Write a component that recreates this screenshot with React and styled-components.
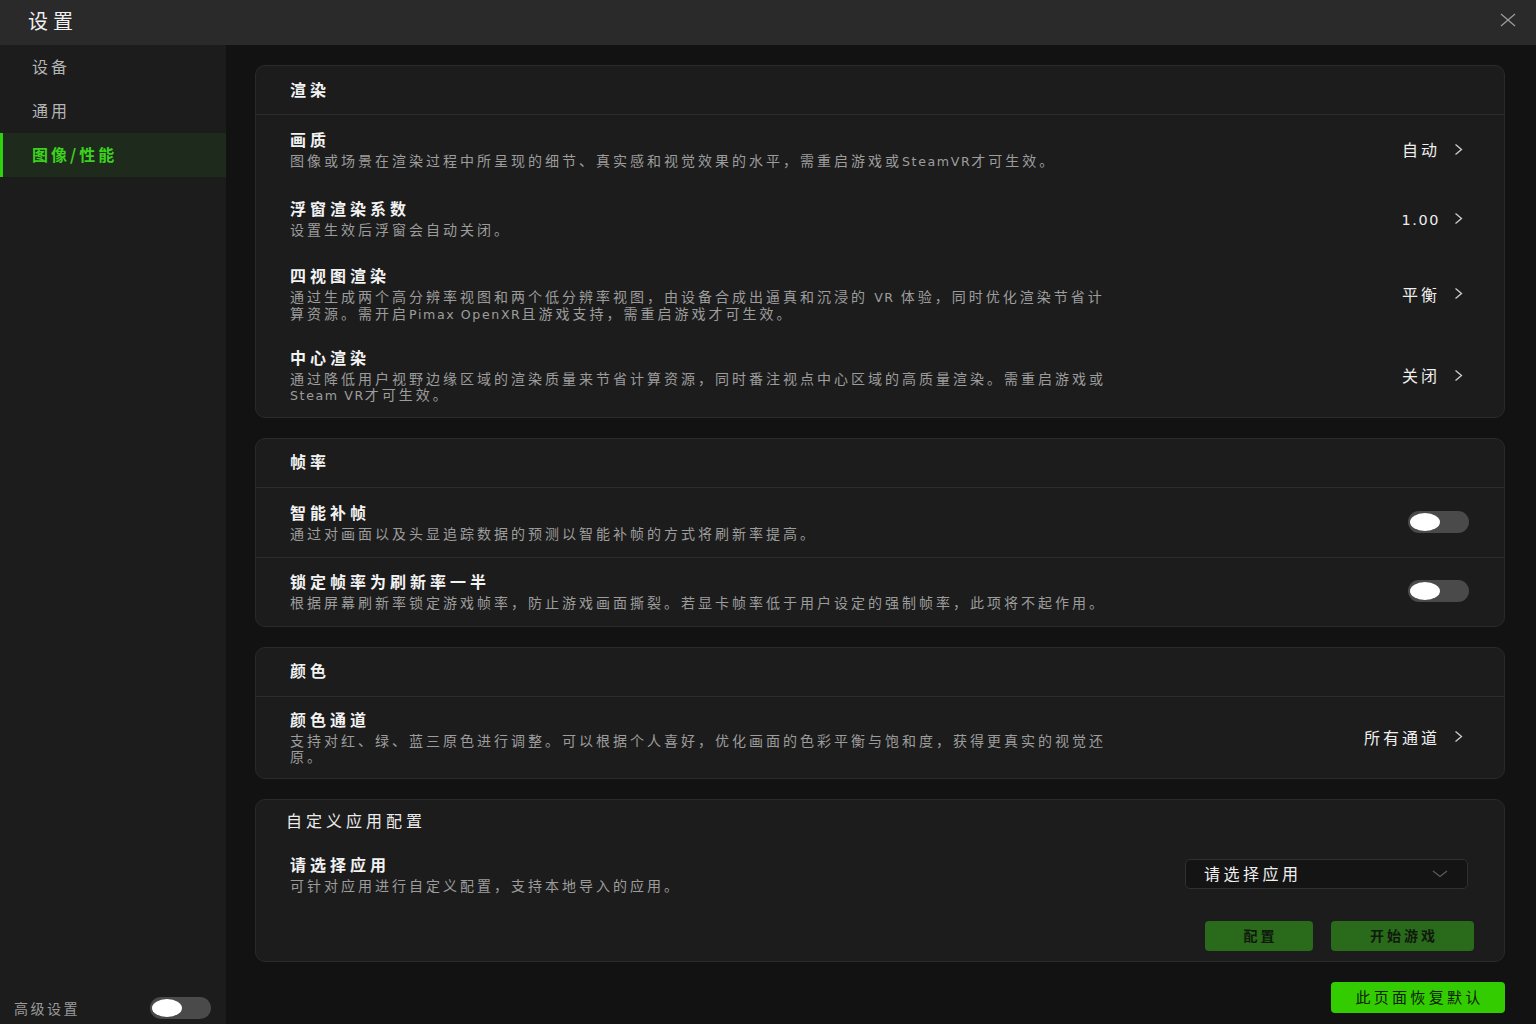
import React from "react"
import styled, { createGlobalStyle } from "styled-components"

const GlobalStyle = createGlobalStyle`
  * { box-sizing: border-box; }
  html, body { margin: 0; padding: 0; height: 100%; background: #121212; overflow: hidden; }
  body {
    font-family: "Noto Sans CJK SC", "Noto Sans", sans-serif;
    color: #e8e8e8;
  }
`

const sections = [
  {
    title: "渲染",
    divided: false,
    rows: [
      {
        name: "画质",
        desc: "图像或场景在渲染过程中所呈现的细节、真实感和视觉效果的水平，需重启游戏或SteamVR才可生效。",
        value: "自动",
      },
      { name: "浮窗渲染系数", desc: "设置生效后浮窗会自动关闭。", value: "1.00" },
      {
        name: "四视图渲染",
        desc: "通过生成两个高分辨率视图和两个低分辨率视图，由设备合成出逼真和沉浸的 VR 体验，同时优化渲染节省计算资源。需开启Pimax OpenXR且游戏支持，需重启游戏才可生效。",
        value: "平衡",
      },
      {
        name: "中心渲染",
        desc: "通过降低用户视野边缘区域的渲染质量来节省计算资源，同时番注视点中心区域的高质量渲染。需重启游戏或Steam VR才可生效。",
        value: "关闭",
      },
    ],
  },
  {
    title: "帧率",
    divided: true,
    rows: [
      { name: "智能补帧", desc: "通过对画面以及头显追踪数据的预测以智能补帧的方式将刷新率提高。", toggle: true },
      {
        name: "锁定帧率为刷新率一半",
        desc: "根据屏幕刷新率锁定游戏帧率，防止游戏画面撕裂。若显卡帧率低于用户设定的强制帧率，此项将不起作用。",
        toggle: true,
      },
    ],
  },
  {
    title: "颜色",
    divided: true,
    rows: [
      {
        name: "颜色通道",
        desc: "支持对红、绿、蓝三原色进行调整。可以根据个人喜好，优化画面的色彩平衡与饱和度，获得更真实的视觉还原。",
        value: "所有通道",
      },
    ],
  },
]

const navItems = ["设备", "通用", "图像/性能"]

// latin runs are set in a wider face with tighter spacing than the CJK text
const withLatin = (text) =>
  text.split(/([A-Za-z0-9.][A-Za-z0-9. ]*[A-Za-z0-9.]|[A-Za-z0-9.])/).map((part, i) =>
    i % 2 === 1 ? <Latin key={i}>{part}</Latin> : part
  )

const Chevron = () => (
  <svg width="9" height="13" viewBox="0 0 9 13" fill="none">
    <path d="M1.5 1.5 L7.5 6.5 L1.5 11.5" stroke="#cfcfcf" strokeWidth="1.3" />
  </svg>
)

const CloseIcon = () => (
  <svg width="16" height="14" viewBox="0 0 16 14" fill="none">
    <path d="M1 1 L15 13 M15 1 L1 13" stroke="#9a9a9a" strokeWidth="1.3" />
  </svg>
)

const ChevronDown = () => (
  <svg width="16" height="8" viewBox="0 0 16 8" fill="none">
    <path d="M1 1 L8 6.5 L15 1" stroke="#5c5c5c" strokeWidth="1.2" />
  </svg>
)

const App = () => {
  return (
    <Page>
      <GlobalStyle />
      <TitleBar>
        <Title>设置</Title>
        <CloseIcon />
      </TitleBar>
      <Body>
        <Sidebar>
          {navItems.map((item, index) => (
            <NavItem key={item} $active={index === 2}>
              {item}
            </NavItem>
          ))}
          <SideBottom>
            <SideLabel>高级设置</SideLabel>
            <Toggle />
          </SideBottom>
        </Sidebar>
        <Main>
          {sections.map((section) => (
            <Card key={section.title}>
              <CardHeader>{section.title}</CardHeader>
              {section.rows.map((row, i) => (
                <Row key={row.name} $line={section.divided && i > 0}>
                  <RowText>
                    <RowName>{row.name}</RowName>
                    <RowDesc>{withLatin(row.desc)}</RowDesc>
                  </RowText>
                  {row.value && (
                    <Value>
                      <span>{withLatin(row.value)}</span>
                      <Chevron />
                    </Value>
                  )}
                  {row.toggle && <RowToggle />}
                </Row>
              ))}
            </Card>
          ))}
          <Card>
            <CustomHead>自定义应用配置</CustomHead>
            <CustomRow>
              <RowText>
                <RowName>请选择应用</RowName>
                <RowDesc>可针对应用进行自定义配置，支持本地导入的应用。</RowDesc>
              </RowText>
              <Select>
                <span>请选择应用</span>
                <ChevronDown />
              </Select>
            </CustomRow>
            <ButtonRow>
              <DarkButton $width={108}>配置</DarkButton>
              <DarkButton $width={143}>开始游戏</DarkButton>
            </ButtonRow>
          </Card>
          <ResetButton>此页面恢复默认</ResetButton>
        </Main>
      </Body>
    </Page>
  )
}

export default App

const Page = styled.div`
  height: 100vh;
  display: flex;
  flex-direction: column;
`

const TitleBar = styled.header`
  height: 45px;
  flex-shrink: 0;
  background: #2a2a2a;
  display: flex;
  align-items: center;
  justify-content: space-between;
  padding: 0 20px 0 28px;
  svg {
    margin-top: -6px;
  }
`

const Title = styled.h1`
  margin: 0 0 4px;
  font-size: 20px;
  font-weight: 400;
  letter-spacing: 5px;
  color: #f0f0f0;
`

const Body = styled.div`
  flex: 1;
  display: flex;
  min-height: 0;
`

const Sidebar = styled.nav`
  width: 226px;
  flex-shrink: 0;
  background: #1c1c1c;
  display: flex;
  flex-direction: column;
`

const NavItem = styled.div`
  height: 44px;
  display: flex;
  align-items: center;
  padding-left: ${(p) => (p.$active ? "29px" : "32px")};
  padding-bottom: 2px;
  font-size: 16px;
  letter-spacing: 3px;
  color: ${(p) => (p.$active ? "#3bd11c" : "#b4b4b4")};
  font-weight: ${(p) => (p.$active ? 700 : 400)};
  background: ${(p) => (p.$active ? "#1e2a1c" : "transparent")};
  border-left: ${(p) => (p.$active ? "3px solid #2fd10f" : "none")};
`

const SideBottom = styled.div`
  margin-top: auto;
  display: flex;
  align-items: center;
  justify-content: space-between;
  padding: 0 15px 5px 14px;
`

const SideLabel = styled.span`
  font-size: 14px;
  letter-spacing: 2.5px;
  color: #9a9a9a;
`

const Toggle = styled.div`
  width: 61px;
  height: 22px;
  border-radius: 11px;
  background: #4a4a4a;
  position: relative;
  flex-shrink: 0;
  &::after {
    content: "";
    position: absolute;
    left: 2px;
    top: 2px;
    width: 30px;
    height: 18px;
    border-radius: 50%;
    background: #ffffff;
  }
`

const RowToggle = styled(Toggle)`
  margin-left: auto;
`

const Main = styled.main`
  flex: 1;
  background: #121212;
  padding: 20px 31px 0 29px;
  display: flex;
  flex-direction: column;
  gap: 20px;
  overflow: hidden;
`

const Card = styled.section`
  background: #1c1c1c;
  border: 1px solid #2a2a2a;
  border-radius: 10px;
  flex-shrink: 0;
`

const CardHeader = styled.div`
  height: 49px;
  display: flex;
  align-items: center;
  padding: 0 0 3px 34px;
  border-bottom: 1px solid #2c2c2c;
  font-size: 16px;
  font-weight: 700;
  letter-spacing: 4px;
  color: #f2f2f2;
`

const Row = styled.div`
  min-height: 69px;
  display: flex;
  align-items: center;
  padding: 13px 35px 14px 34px;
  border-top: ${(p) => (p.$line ? "1px solid #2c2c2c" : "none")};
`

const RowText = styled.div`
  display: flex;
  flex-direction: column;
  gap: 4px;
  max-width: 830px;
`

const RowName = styled.div`
  font-size: 16px;
  line-height: 18px;
  font-weight: 700;
  letter-spacing: 4px;
  color: #f2f2f2;
`

const RowDesc = styled.div`
  font-size: 14px;
  line-height: 16px;
  letter-spacing: 3px;
  color: #9c9c9c;
`

const Latin = styled.span`
  font-family: "DejaVu Sans", "Noto Sans", sans-serif;
  font-size: 0.9em;
  line-height: 1;
  letter-spacing: 1.6px;
`

const Value = styled.div`
  margin-left: auto;
  display: flex;
  align-items: center;
  gap: 14px;
  padding-right: 6px;
  font-size: 16px;
  letter-spacing: 3px;
  color: #eeeeee;
`

const CustomHead = styled.div`
  height: 42px;
  display: flex;
  align-items: center;
  padding: 0 0 2px 30px;
  font-size: 16px;
  letter-spacing: 4px;
  color: #ececec;
`

const CustomRow = styled.div`
  display: flex;
  align-items: center;
  justify-content: space-between;
  padding: 13px 36px 0 34px;
`

const Select = styled.div`
  width: 283px;
  height: 30px;
  background: #141414;
  border: 1px solid #303030;
  border-radius: 5px;
  display: flex;
  align-items: center;
  justify-content: space-between;
  padding: 0 19px 2px 18px;
  font-size: 16px;
  letter-spacing: 3.5px;
  color: #f0f0f0;
  svg {
    margin-top: 2px;
  }
`

const ButtonRow = styled.div`
  display: flex;
  justify-content: flex-end;
  gap: 18px;
  padding: 28px 30px 10px 0;
`

const DarkButton = styled.button`
  width: ${(p) => p.$width}px;
  height: 30px;
  border: none;
  border-radius: 4px;
  background: #2a6a1b;
  font-family: inherit;
  font-size: 14px;
  font-weight: 700;
  letter-spacing: 3px;
  color: #0f1a0c;
  padding: 0 0 2px 3px;
`

const ResetButton = styled.button`
  align-self: flex-end;
  width: 174px;
  height: 31px;
  border: none;
  border-radius: 4px;
  background: #33cc00;
  font-family: inherit;
  font-size: 15px;
  letter-spacing: 3.3px;
  color: #0c1c06;
  padding: 0 0 2px 3px;
  flex-shrink: 0;
`
